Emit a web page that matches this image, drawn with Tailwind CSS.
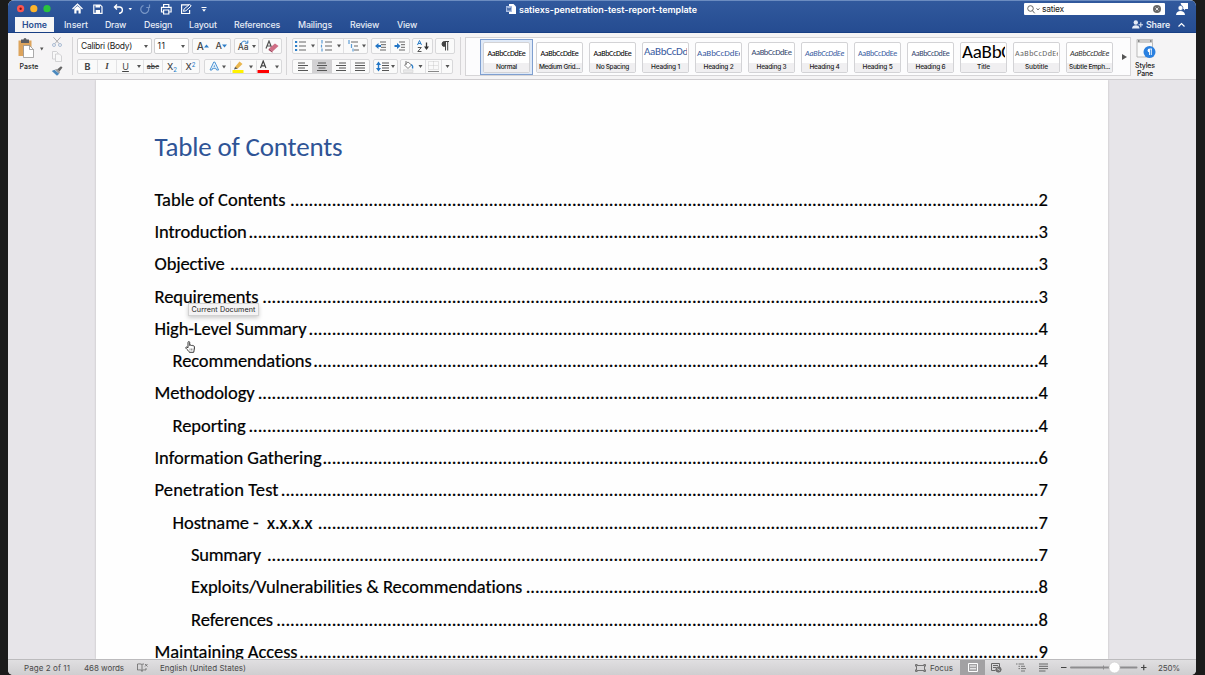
<!DOCTYPE html>
<html lang="en">
<head>
<meta charset="utf-8">
<title>satiexs-penetration-test-report-template</title>
<script src="https://cdn.jsdelivr.net/npm/@tailwindcss/browser@4"></script>
</head>
<body class="w-[1205px] h-[675px] overflow-hidden bg-[#1b1b1b] font-['Inter',sans-serif] text-[#333]">
<svg class="hidden">
  <symbol id="dn" viewBox="0 0 4 3"><path d="M0 0h4L2 3z" fill="#555"/></symbol>
</svg>
<div class="relative ml-2 w-[1188px] h-[675px] rounded-t-[6px] rounded-b-[5px] overflow-hidden flex flex-col bg-[#e7e5e9]">

  <!-- Title bar and tabs -->
  <header class="h-[33px] shrink-0 border-t border-[#6b8cc0] border-b border-b-[#183f84] bg-linear-to-b from-[#31599d] to-[#254c91] text-white flex flex-col">
    <div class="h-[17px] flex items-center">
      <svg class="ml-[8px] w-[36px] h-[10px] shrink-0" viewBox="0 0 36 10"><circle cx="4.6" cy="4.7" r="3.6" fill="#fc5650"/><circle cx="4.6" cy="4.7" r="1.2" fill="#7d1210"/><circle cx="17.8" cy="4.7" r="3.6" fill="#fdb42b"/><circle cx="31" cy="4.7" r="3.6" fill="#29c33d"/></svg>
      <svg class="ml-[20px] w-[140px] h-[14px] shrink-0" viewBox="0 0 140 14" fill="none" stroke="#fff" stroke-width="1.2">
        <path d="M.5 7 5.500 2.200 10.500 7"/><path d="M2.300 6.600v4.900h2.200v-3h2v3h2.200V6.600L5.500 3.900z" fill="#fff" stroke="none"/>
        <path d="M21.800 3h6.500l1.700 1.700v6.700h-8.200z"/><path d="M23.500 3h4.500v2.600h-4.500zM23.700 8h4.300v3.300h-4.300z" fill="#fff" stroke="none"/>
        <path d="M45 2.500 42.500 5 45 7.500M42.800 5h5.200a3.200 3.200 0 0 1 0 6.200H47" stroke-width="1.400"/><path d="M56.500 6h3.500l-1.750 2.300z" fill="#fff" stroke="none"/>
        <path d="M71.500 3.500a4 4 0 1 0 5 2.500M77.500 2.500v3h-3.200" stroke="#7795c5"/>
        <path d="M91.600 5V2.500h5.200V5M91.500 10h-2V5.300h9.600V10h-2M91.600 8h5.200v4h-5.200z"/>
        <path d="M117 2.900h-7.400v8.600h8V8"/><path d="m111.500 9.300.6-2.300 5.600-4.700 1.500 1.700-5.300 4.800z" stroke-width="1"/>
        <path d="M129.500 5.500h5" stroke-width="1"/><path d="M130 7.200h4l-2 2.600z" fill="#fff" stroke="none"/>
      </svg>
      <svg class="ml-[294px] w-[10px] h-[10px] shrink-0" viewBox="0 0 10 10"><path d="M3 0h4.500L10 2.500V10H3z" fill="#fff"/><path d="M0 2h6v6H0z" fill="#a9bce0"/><path d="m1.200 3.600.8 3 1-2.600 1 2.600.8-3" fill="none" stroke="#31599d" stroke-width=".8"/></svg>
      <span data-w="178" class="ml-[3px] mt-[2px] text-[9px] font-semibold whitespace-nowrap">satiexs-penetration-test-report-template</span>
      <div class="ml-auto w-[141px] h-[12px] bg-white rounded-[1px] flex items-center text-[#222]">
        <svg class="ml-[3px] w-[13px] h-[9px]" viewBox="0 0 13 9" fill="none" stroke="#555"><circle cx="3.500" cy="3.500" r="2.800" stroke-width=".9"/><path d="m5.500 5.700 2.200 2.600M9.500 3.500l1.500 1.300 1.500-1.300" stroke-width=".9"/></svg>
        <span data-w="22" class="ml-[2px] text-[8.500px] whitespace-nowrap">satiex</span>
        <svg class="ml-auto mr-[4px] w-[8px] h-[8px]" viewBox="0 0 8 8"><circle cx="4" cy="4" r="4" fill="#686868"/><path d="m2.500 2.500 3 3m0-3-3 3" stroke="#fff" stroke-width=".8"/></svg>
      </div>
      <svg class="ml-[11px] mr-[8px] w-[12px] h-[12px]" viewBox="0 0 12 12" fill="#fff"><path d="M4.500 0H12v6H9.300L8 7.500V6H7z"/><circle cx="4.500" cy="5" r="2.500" stroke="#31599d" stroke-width=".7"/><path d="M0 12c.3-3 2-4 4.500-4S8.700 9 9 12z"/></svg>
    </div>
    <div class="h-[15px] flex items-center text-[8.800px] font-medium whitespace-nowrap text-[#e6ecf6]">
      <div class="ml-[7px] w-[39px] h-[15px] bg-[#f6f6f6] flex items-center pl-[7px] text-[#2a4f91] font-semibold"><span data-w="25">Home</span></div>
      <span data-w="24" class="ml-[10px]">Insert</span><span data-w="21" class="ml-[17px]">Draw</span><span data-w="28" class="ml-[18px]">Design</span><span data-w="28" class="ml-[17px]">Layout</span><span data-w="46" class="ml-[17px]">References</span><span data-w="34" class="ml-[18px]">Mailings</span><span data-w="29" class="ml-[18px]">Review</span><span data-w="20" class="ml-[18px]">View</span>
      <svg class="ml-auto w-[11px] h-[9px]" viewBox="0 0 11 9" fill="#e6ecf6"><circle cx="3.800" cy="2.500" r="2.200"/><path d="M0 8.500c.2-2.500 1.500-3.300 3.800-3.300s3.500.8 3.700 3.300z"/><path d="M8.800 2.300v5M6.500 4.800H11" stroke="#e6ecf6"/></svg>
      <span data-w="24" class="ml-[3px] font-semibold">Share</span>
      <svg class="ml-[8px] mr-[11px] w-[7px] h-[5px]" viewBox="0 0 7 5"><path d="m.5 4.500 3-3 3 3" fill="none" stroke="#fff" stroke-width="1.200"/></svg>
    </div>
  </header>

  <!-- Ribbon -->
  <div class="h-[47px] shrink-0 bg-[#f5f4f5] border-b border-[#cfcdd0] flex">
    <div class="ml-[8px] w-[28px] pt-[5px] flex flex-col items-center">
      <svg class="w-[28px] h-[20px]" viewBox="0 0 28 20"><path d="M2.500 2.500h13v15.500h-13z" fill="#dda45c"/><path d="M5 1.500h2.500a1.500 1.500 0 0 1 3 0H13V5H5z" fill="#5c5c60"/><path d="M7.500 7.500h6l4 4V19.500h-10z" fill="#fff" stroke="#888" stroke-width=".7"/><path d="M13.500 7.500v4h4" fill="none" stroke="#888" stroke-width=".7"/><path d="M24 9.500h3.500l-1.750 3z" fill="#555"/></svg>
      <span data-w="19" class="text-[7px] font-medium leading-[9px] mt-[4px] -ml-[2px] text-[#222]">Paste</span>
    </div>
    <div class="ml-[7px] w-[12px] pt-[4px] flex flex-col items-center gap-[4px]">
      <svg class="w-[10px] h-[10px]" viewBox="0 0 10 10" fill="none" stroke="#adadb0"><path d="m1.500.3 5.700 6.400M8.500.3 2.800 6.700"/><circle cx="2" cy="8" r="1.500" stroke="#a9bdd3"/><circle cx="8" cy="8" r="1.500" stroke="#a9bdd3"/></svg>
      <svg class="w-[10px] h-[11px]" viewBox="0 0 10 11" fill="#f8f8f8" stroke="#c9c9cb" stroke-width=".8"><path d="M.5.5h4l1.500 1.500v6H.500z"/><path d="M3.500 3h4l2 2v5.500h-6z"/></svg>
      <svg class="w-[12px] h-[10px]" viewBox="0 0 12 10"><path d="m6 3.500 4-3.300 1.500 1.300-3 4z" fill="#666"/><path d="M3.800 3.600 6 3l3 3-.8 1.700z" fill="#9a9a9a"/><path d="M.8 5 3.500 3.800l4.700 4L6 9.800z" fill="#4a88bd"/></svg>
    </div>
    <div class="ml-[9px] mt-[4px] w-px h-[38px] bg-[#d6d5d7]"></div>

    <!-- Font group -->
    <div class="ml-[4px] w-[205px] pt-[5px] flex flex-col gap-[5px]">
      <div class="flex h-[16px] text-[8.500px] text-[#222] whitespace-nowrap">
        <div class="w-[75px] bg-white border border-[#cfcfd1] rounded-[2px] flex items-center pl-[3px] pr-[3px]"><span data-w="51">Calibri (Body)</span><svg class="ml-auto w-[4px] h-[3px]"><use href="#dn"/></svg></div>
        <div class="ml-[2px] w-[36px] bg-white border border-[#cfcfd1] rounded-[2px] flex items-center pl-[3px] pr-[3px]"><span data-w="8">11</span><svg class="ml-auto w-[4px] h-[3px]"><use href="#dn"/></svg></div>
        <div class="ml-[3px] w-[39px] bg-[#fafafa] border border-[#d8d8da] rounded-[2px] flex items-center justify-around text-[#444]">
          <span class="text-[10px] font-medium flex items-center">A<svg class="w-[5px] h-[4px]" viewBox="0 0 5 4"><path d="M0 3.500h5L2.500.5z" fill="#2e7fc9"/></svg></span>
          <span class="text-[9px] font-medium flex items-center">A<svg class="w-[5px] h-[4px]" viewBox="0 0 5 4"><path d="M0 .5h5L2.500 3.500z" fill="#2e7fc9"/></svg></span>
        </div>
        <div class="ml-[3px] w-[25px] bg-[#fafafa] border border-[#d8d8da] rounded-[2px] flex items-center justify-center gap-[3px] text-[#444]">
          <span class="relative text-[8.500px] font-medium leading-none pt-[2px]">Aa<svg class="absolute left-[2px] -top-[1px] w-[9px] h-[5px]" viewBox="0 0 9 5"><path d="M1 4C2 .5 5.500.5 7 2.500M7.800.5v2.700H5" fill="none" stroke="#2e7fc9"/></svg></span><svg class="w-[4px] h-[3px]"><use href="#dn"/></svg></div>
        <div class="ml-[3px] w-[20px] bg-[#fafafa] border border-[#d8d8da] rounded-[2px] flex items-center justify-center">
          <svg class="w-[14px] h-[13px]" viewBox="0 0 14 13"><path d="M1 8.500 4 1l3 7.500M2 6h4" fill="none" stroke="#555" stroke-width="1.200"/><path d="m4 8.500 6-5 3.500 2.500-6 5.500z" fill="#cf6f86"/><path d="m4 8.500 3.500 3v1.200L3.500 10z" fill="#9f4059"/></svg></div>
      </div>
      <div class="flex h-[15px] text-[9px] text-[#444]">
        <div class="w-[123px] bg-[#fafafa] border border-[#d8d8da] rounded-[2px] flex items-center [&>*]:text-center [&>*]:leading-[13px]">
          <span class="w-[19px] font-bold">B</span><span class="w-[19px] font-['Liberation_Serif'] italic font-bold border-l border-[#e3e3e5]">I</span><span class="w-[18px] underline border-l border-[#e3e3e5]">U</span><span class="w-[9px] h-[13px] flex items-center justify-center"><svg class="w-[4px] h-[3px]"><use href="#dn"/></svg></span><span class="w-[19px] text-[7px] font-medium line-through border-l border-[#e3e3e5]">abc</span><span class="w-[19px] border-l border-[#e3e3e5] font-medium">X<span class="text-[6px] text-[#2e7fc9] relative top-[2px]">2</span></span><span class="w-[18px] border-l border-[#e3e3e5] font-medium">X<span class="text-[6px] text-[#2e7fc9] relative -top-[3px]">2</span></span>
        </div>
        <div class="ml-[4px] w-[78px] bg-[#fafafa] border border-[#d8d8da] rounded-[2px] flex items-center">
          <svg class="w-[76px] h-[13px]" viewBox="0 0 76 13"><path d="M5 10 8.800 2h1l3.800 8h-2l-.8-1.700H7.600L7 10z" fill="#e8f3fc" stroke="#3c8ad0" stroke-width=".9"/><path d="M8.500 6.700h1.600l-.8-2z" fill="#3c8ad0"/><path d="M17 5.500h4l-2 3zM44 5.500h4l-2 3zM70 5.500h4l-2 3z" fill="#555"/><path d="M25.500.5v12M51.500.5v12" stroke="#e0e0e2"/><path d="m30 7 4.500-5.500 3 2.500-4.700 4.500L30 9z" fill="#e9b64f"/><path d="m30 7 2.800 1.500L29 9.500z" fill="#555"/><path d="M27.500 10h11v3h-11z" fill="#fff200"/><path d="m55.500 8 2.700-7 2.700 7M56.500 5.800h3.500" fill="none" stroke="#444" stroke-width="1.200"/><path d="M52.500 10h11.500v3H52.500z" fill="#f00"/></svg>
        </div>
      </div>
    </div>
    <div class="ml-[4px] mt-[4px] w-px h-[38px] bg-[#d6d5d7]"></div>

    <!-- Paragraph group -->
    <div class="ml-[5px] w-[164px] pt-[5px] flex flex-col gap-[5px]">
      <div class="flex h-[16px]">
        <div class="w-[76px] bg-[#fafafa] border border-[#d8d8da] rounded-[2px]"><svg class="w-[74px] h-[14px]" viewBox="0 0 74 14"><path d="M2 3h2.200M2 7h2.200M2 11h2.200" stroke="#2e7fc9" stroke-width="2"/><path d="M6 3h7M6 7h7M6 11h7M32 3h7M32 7h7M32 11h7M58 3h7M61 7h4M61 11h5" stroke="#666"/><path d="M29 1v3.500M28.500 5.800v2.700M29 9.500v3M56 1v4M58.500 5v4M60 9.500v3" stroke="#5c9dd6" stroke-width="1.200"/><path d="M18 5.500h4l-2 3zM44 5.500h4l-2 3zM69 5.500h4l-2 3z" fill="#555"/><path d="M24.500 0v14M50.500 0v14" stroke="#e0e0e2"/></svg></div>
        <div class="ml-[3px] w-[39px] bg-[#fafafa] border border-[#d8d8da] rounded-[2px]"><svg class="w-[37px] h-[14px]" viewBox="0 0 37 14"><path d="M8 3h6M9 5.700h5M9 8.300h5M8 11h6M27 3h6M29 5.700h4M29 8.300h4M27 11h6" stroke="#666"/><path d="m3 7 3.500-3v2H9v2H6.500v2zM28.500 7 25 4v2h-2.500v2H25v2z" fill="#2376c6"/><path d="M18.500 0v14" stroke="#e0e0e2"/></svg></div>
        <div class="ml-[2px] w-[21px] bg-[#fafafa] border border-[#d8d8da] rounded-[2px]"><svg class="w-[19px] h-[14px]" viewBox="0 0 19 14"><path d="m4.500 6 2-4.500 2 4.500M5 4.500h3" fill="none" stroke="#2e7fc9"/><path d="M4.800 8.500h3.500l-3.500 4h3.700" fill="none" stroke="#555"/><path d="M13.500 3.500v6" stroke="#333" stroke-width="1.300"/><path d="M11 7.500h5l-2.500 3.500z" fill="#333"/></svg></div>
        <div class="ml-[2px] w-[20px] bg-[#fafafa] border border-[#d8d8da] rounded-[2px]"><svg class="w-[18px] h-[14px]" viewBox="0 0 18 14"><path d="M13 2.500H8.500a2.500 2.500 0 0 0 0 5M9.500 2.500v9M11.700 2.500v9" stroke="#444" fill="none"/><path d="M9.500 2.500h-1a2.500 2.500 0 0 0 0 5h1z" fill="#444"/></svg></div>
      </div>
      <div class="flex h-[15px]">
        <div class="w-[78px] bg-[#fafafa] border border-[#d8d8da] rounded-[2px]"><svg class="w-[76px] h-[13px]" viewBox="0 0 76 13"><path d="M19 0h20v13H19z" fill="#d2d1d3"/><path d="M5 3h7M5 5.500h10M5 8h7M5 10.500h10M25 3h8M24 5.500h10M25.500 8h7M24 10.500h10M46 3h7M43 5.500h10M46 8h7M43 10.500h10M62 3h10M62 5.500h10M62 8h10M62 10.500h10" stroke="#555"/><path d="M57.500 0v13" stroke="#e0e0e2"/></svg></div>
        <div class="ml-[3px] w-[25px] bg-[#fafafa] border border-[#d8d8da] rounded-[2px]"><svg class="w-[23px] h-[13px]" viewBox="0 0 23 13"><path d="M8 3h7M8 5.500h7M8 8h7M8 10.500h7" stroke="#555"/><path d="M4.500 4v5" stroke="#2376c6" stroke-width="1.400"/><path d="M2 5h5L4.500 1.500zM2 8h5l-2.500 3.500z" fill="#2376c6"/><path d="M17 5h4l-2 3z" fill="#555"/></svg></div>
        <div class="ml-[2px] w-[53px] bg-[#fafafa] border border-[#d8d8da] rounded-[2px]"><svg class="w-[51px] h-[13px]" viewBox="0 0 51 13"><path d="m3.500 5 3.500-3 3.500 3-3.500 3.500z" fill="#fff" stroke="#777" stroke-width=".9"/><path d="M5 1v4" stroke="#777"/><path d="M10 4.500c1.500.5 2 2 1.500 4" fill="none" stroke="#2e7fc9" stroke-width="1.300"/><path d="M2.500 9.800H12v2.700H2.500z" fill="#e9e9ea" stroke="#ccc" stroke-width=".5"/><path d="M17.500 5h4l-2 3zM44.500 5h4l-2 3z" fill="#555"/><path d="M24.500 0v13M40.500 0v13" stroke="#e0e0e2"/><path d="M27.500 1.500h10v8h-10zM32.500 1.500v8M27.500 5.500h10" fill="none" stroke="#bbb" stroke-width=".7" stroke-dasharray="1 1"/><path d="M27 11.500h11" stroke="#888"/></svg></div>
      </div>
    </div>
    <div class="ml-[4px] mt-[4px] w-px h-[38px] bg-[#d6d5d7]"></div>

    <!-- Style gallery -->
    <div class="ml-[4px] mt-[4px] w-[666px] h-[39px] shrink-0 bg-[#fcfcfd] border border-[#d6d5d7] flex items-center">
      <div id="gallery" class="ml-[14px] flex"></div>
      <svg class="ml-auto mr-[3px] w-[5px] h-[6px]" viewBox="0 0 5 6"><path d="M0 0v6l5-3z" fill="#555"/></svg>
    </div>
    <div class="ml-[2px] w-[24px] pt-[5px] flex flex-col items-center text-[7px] font-medium leading-[8px] text-[#222]">
      <svg class="w-[22px] h-[22px] mb-[2px] shrink-0" viewBox="0 0 22 22"><path d="M3 1.500h15.500v17.500H3z" fill="#fafafa" stroke="#aaa" stroke-width=".8"/><path d="M3 1.500h15.500v3.500H3z" fill="#ccc"/><path d="M4 3h1.500M16 3h1.500" stroke="#444"/><circle cx="15.500" cy="14" r="6" fill="#2a80e0"/><path d="M18 11h-2.500M15.500 11v6M17.300 11v6" stroke="#fff" stroke-width=".9"/><path d="M15.500 10.500a1.800 1.800 0 0 0 0 3.800z" fill="#fff"/></svg>
      <span data-w="20">Styles</span><span data-w="16">Pane</span>
    </div>
  </div>

  <!-- Document -->
  <main class="h-[579px] shrink-0 overflow-hidden flex justify-start">
    <div class="ml-[88px] w-[1012px] h-[579px] bg-[#fefefe] shadow-[0_0_2px_#bbb] pl-[58.500px] pr-[60px] font-['Carlito','Lato',sans-serif] text-black">
      <h1 class="pt-[51px] h-[103.500px] text-[27px] leading-[32px] text-[#2f5496]"><span data-w="188" class="inline-block whitespace-nowrap">Table of Contents</span></h1>
      <div id="toc" class="[-webkit-text-stroke:0.2px_black]"></div>
    </div>
  </main>

  <!-- Status bar -->
  <footer class="h-[16px] shrink-0 border-t border-[#bcbbbd] bg-linear-to-b from-[#e0dfe1] to-[#cfced0] flex items-center text-[8px] text-[#4a4a4a] whitespace-nowrap">
    <span data-w="46" class="ml-[16px]">Page 2 of 11</span>
    <span data-w="40" class="ml-[14px]">468 words</span>
    <svg class="ml-[13px] w-[11px] h-[9px]" viewBox="0 0 11 9" fill="none" stroke="#666" stroke-width=".8"><path d="M5 1.500C4 .8 2 .8.500 1v6c1.500-.2 3.500-.2 4.500.5C6 6.800 7 6.800 9 7V5M5 1.500V9M5 1.500C5.500 1 6 1 7 1M8 1l2.500 2.500M10.500 1 8 3.500"/></svg>
    <span data-w="86" class="ml-[12px]">English (United States)</span>
    <svg class="ml-auto w-[11px] h-[8px]" viewBox="0 0 11 8" fill="none" stroke="#666" stroke-width=".9"><path d="M.5 2.500v-2h2M8.500.5h2v2M10.500 5.500v2h-2M2.500 7.500h-2v-2M1.500 1.500h8v5h-8z"/></svg>
    <span data-w="23" class="ml-[4px]">Focus</span>
    <div class="ml-[7px] w-[25px] h-[15px] bg-[#a2a1a3] flex items-center justify-center"><svg class="w-[10px] h-[9px]" viewBox="0 0 10 9" fill="none" stroke="#fff"><path d="M.5.5h9v8h-9zM2 3h6M2 5.800h6"/></svg></div>
    <svg class="ml-[6px] w-[11px] h-[10px]" viewBox="0 0 11 10" fill="none" stroke="#666"><path d="M.5.500h8v4M.500.500v7h4M2 2.500h5M2 4.500h3"/><circle cx="7.500" cy="6.500" r="2.600" fill="#777"/><path d="m6 5.500 3 2" stroke="#ddd" stroke-width=".7"/></svg>
    <svg class="ml-[14px] w-[10px] h-[9px]" viewBox="0 0 10 9" stroke="#777"><path d="M0 1h1.500M2.500 1H8M2.500 3.300H4M5 3.300h4M2.500 5.600H4M5 5.600h5M5 8h4"/></svg>
    <svg class="ml-[13px] w-[10px] h-[9px]" viewBox="0 0 10 9" stroke="#666"><path d="M0 1h9M0 3.300h9M0 5.600h9M0 8h6.500"/></svg>
    <svg class="ml-[11px] w-[88px] h-[15px]" viewBox="0 0 88 15"><path d="M1 7.500h5.500M81 7.500h5.500M83.750 4.800v5.500" stroke="#444" stroke-width="1.200"/><path d="M11 7.500h65.500" stroke="#8e8d8f" stroke-width="2" stroke-linecap="round"/><path d="M43.500 5.500v4" stroke="#8e8d8f"/><circle cx="54.500" cy="7.500" r="5.400" fill="#fff" stroke="#c4c4c4" stroke-width=".5"/></svg>
    <span data-w="22" class="ml-[10px] mr-[16px]">250%</span>
  </footer>

  <!-- Tooltip and pointer -->
  <div class="absolute left-[180px] top-[303px] w-[71px] h-[13px] bg-[#f4f3f4] border border-[#d2d2d2] shadow-[0_2px_4px_#0003] flex items-center justify-center text-[7.200px] pt-px text-[#222] whitespace-nowrap"><span data-w="64">Current Document</span></div>
  <svg class="absolute left-[177px] top-[341px] w-[11px] h-[12px]" viewBox="0 0 11 12"><path d="M3 6.800V1.500c0-1.300 1.700-1.300 1.700 0v3c.3-.8 1.500-.7 1.600.2.400-.7 1.500-.5 1.600.3.500-.4 1.500-.2 1.500.7v2.600c0 1-.7 1.700-.7 3H4.300C4 9.800 2 8.700.9 7.200c-.5-.9.500-1.500 1.200-1z" fill="#fff" stroke="#222" stroke-width=".9"/><path d="M5 7.500v2M6.500 7.500v2M8 7.500v2" stroke="#333" stroke-width=".5"/></svg>
</div>

<script>
// name, sample class, sample width, name width
const styles = [
  ['Normal', 'text-[8px] text-black', 38, 21],
  ['Medium Grid...', 'text-[8px] text-black', 38, 41],
  ['No Spacing', 'text-[8px] text-black', 38, 33],
  ['Heading 1', 'text-[11px] text-[#3a5c9f]', 54, 29],
  ['Heading 2', 'text-[9px] text-[#3a5c9f]', 46, 30],
  ['Heading 3', 'text-[8.500px] text-[#33466e]', 40, 30],
  ['Heading 4', 'text-[8px] italic text-[#3a5c9f]', 39, 30],
  ['Heading 5', 'text-[8px] text-[#3a5c9f]', 39, 30],
  ['Heading 6', 'text-[8px] text-[#33466e]', 38, 30],
  ['Title', 'text-[19px] text-black', 96, 13],
  ['Subtitle', 'text-[8px] text-[#666]', 46, 23],
  ['Subtle Emph...', 'text-[8px] italic text-[#333]', 39, 41],
];
document.getElementById('gallery').innerHTML = styles.map(([name, cls, w, lw], i) => `
  <div class="w-[53px] h-[36px] p-[2px] ${i ? '' : 'bg-[#dfe9f7] outline outline-[#7f9fd0] -outline-offset-1'}">
    <div class="mx-auto w-[47px] h-[31px] mt-px bg-white border border-[#d3d3d6] rounded-[2px] overflow-hidden flex flex-col">
      <div class="h-[20px] flex items-center ${w > 41 ? 'pl-px mr-px overflow-hidden' : 'justify-center'} font-['Carlito','Lato',sans-serif] whitespace-nowrap ${cls}"><span data-w="${w}">AaBbCcDdEe</span></div>
      <div class="h-[9px] shrink-0 bg-[#f0eff1] flex items-center justify-center text-[6.500px] leading-[9px] font-medium text-[#222] whitespace-nowrap"><span data-w="${lw}">${name}</span></div>
    </div>
  </div>`).join('');

// label, left edge, label width, leader start, page number
const toc = [
  ['Table of Contents', 0, 131, 135, 2],
  ['Introduction', 0, 92, 93, 3],
  ['Objective', 0, 70, 75, 3],
  ['Requirements', 0, 104, 107, 3],
  ['High-Level Summary', 0, 152, 153, 4],
  ['Recommendations', 18, 139, 158, 4],
  ['Methodology', 0, 100, 103, 4],
  ['Reporting', 18, 73, 93, 4],
  ['Information Gathering', 0, 167, 167, 6],
  ['Penetration Test', 0, 124, 126, 7],
  ['Hostname -&nbsp; x.x.x.x', 18, 140, 163, 7],
  ['Summary', 36.500, 70, 112, 7],
  ['Exploits/Vulnerabilities &amp; Recommendations', 36.500, 331, 370, 8],
  ['References', 36.500, 82, 121, 8],
  ['Maintaining Access', 0, 143, 144, 9],
];
document.getElementById('toc').innerHTML = toc.map(([t, x, w, s, p]) => {
  const n = Math.round((884.500 - s) / 4.62);
  return `<div class="h-[32.300px] flex items-center text-[18.500px] leading-[32px] whitespace-nowrap" style="padding-left:${x}px">
    <span data-w="${w}">${t}</span><span class="ml-auto" data-w="${n * 4.62}">${'.'.repeat(n)}</span><span data-w="9.500">${p}</span></div>`;
}).join('');

// Adjust tracking so that every label takes its set width
function fit() {
  document.querySelectorAll('[data-w]').forEach(e => {
    e.style.letterSpacing = '0px';
    e.style.flexShrink = 0;
    const r = document.createRange();
    r.selectNodeContents(e);
    e.style.letterSpacing = (e.dataset.w - r.getBoundingClientRect().width) / e.textContent.length + 'px';
  });
}
fit();
addEventListener('load', () => { fit(); requestAnimationFrame(fit); setTimeout(fit, 60); });
document.fonts.ready.then(fit);
</script>
</body>
</html>
